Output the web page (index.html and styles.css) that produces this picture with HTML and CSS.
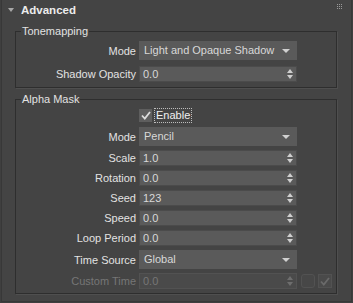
FILE: index.html
```html
<!DOCTYPE html>
<html lang="en">

<head>
    <meta charset="UTF-8">
    <meta name="viewport" content="width=device-width, initial-scale=1.0">
    <title>Advanced</title>
    <link rel="stylesheet" href="styles.css">
</head>

<body>
    <div class="rollout">
        <div class="rollout-head">
            <span class="caret"></span>
            <span class="title">Advanced</span>
            <svg class="grip" width="6" height="6" viewBox="0 0 6 6">
                <g fill="#9a9a9a">
                    <rect x="0" y="0" width="1" height="1"/><rect x="2" y="0" width="1" height="1"/><rect x="4" y="0" width="1" height="1"/>
                    <rect x="0" y="2" width="1" height="1"/><rect x="2" y="2" width="1" height="1"/><rect x="4" y="2" width="1" height="1"/>
                    <rect x="0" y="4" width="1" height="1"/><rect x="2" y="4" width="1" height="1"/><rect x="4" y="4" width="1" height="1"/>
                </g>
            </svg>
        </div>

        <fieldset class="group tonemap">
            <legend>Tonemapping</legend>
            <div class="rows">
                <label>Mode</label>
                <div class="dropdown">Light and Opaque Shadow</div>
                <label>Shadow Opacity</label>
                <div class="spinner">0.0</div>
            </div>
        </fieldset>

        <fieldset class="group alpha">
            <legend>Alpha Mask</legend>
            <div class="rows">
                <span></span>
                <div class="check-row">
                    <span class="checkbox">
                        <svg width="10" height="9" viewBox="0 0 10 9"><path d="M1 4.5 L3.8 7.5 L9 1" fill="none" stroke="#dcdcdc" stroke-width="1.8"/></svg>
                    </span>
                    <span class="check-label">Enable</span>
                </div>
                <label>Mode</label>
                <div class="dropdown">Pencil</div>
                <label>Scale</label>
                <div class="spinner">1.0</div>
                <label>Rotation</label>
                <div class="spinner">0.0</div>
                <label>Seed</label>
                <div class="spinner">123</div>
                <label>Speed</label>
                <div class="spinner">0.0</div>
                <label>Loop Period</label>
                <div class="spinner">0.0</div>
                <label>Time Source</label>
                <div class="dropdown">Global</div>
                <label class="disabled">Custom Time</label>
                <div class="spinner disabled">0.0</div>
                <div class="extra">
                    <span class="small-btn"></span>
                    <span class="small-check">
                        <svg width="10" height="9" viewBox="0 0 10 9"><path d="M1 4.5 L3.8 7.5 L9 1" fill="none" stroke="#6a6a6a" stroke-width="1.8"/></svg>
                    </span>
                </div>
            </div>
        </fieldset>
    </div>
</body>

</html>
```

FILE: styles.css
```css
:root {
    --panel: #444444;
    --field: #5a5a5a;
    --field-border: #4b4b4b;
    --text: #e2e2e2;
    --dim: #767676;
    --groove: #2e2e2e;
}

* {
    box-sizing: border-box;
    margin: 0;
    padding: 0;
}

body {
    font-family: "Liberation Sans", Arial, sans-serif;
    font-size: 11px;
    color: var(--text);
    background-color: #3f3f3f;
}

.rollout {
    width: 351px;
    height: 302px;
    margin-left: 1px;
    background: var(--panel);
    border: 1px solid #383838;
    border-top: none;
}

.rollout-head {
    display: flex;
    align-items: center;
    height: 24px;
    padding: 0 7px 4px 6px;
}

.caret {
    width: 0;
    height: 0;
    border-left: 3px solid transparent;
    border-right: 3px solid transparent;
    border-top: 4px solid #a8a8a8;
    margin-right: 7px;
}

.title {
    font-size: 11.5px;
    font-weight: bold;
    color: #ececec;
    flex: 1;
}

.grip {
    margin-top: -6px;
    margin-right: 1px;
}

.group {
    margin: 0 14px 0 13px;
    border: 1px solid var(--groove);
    box-shadow: 1px 1px 0 #4f4f4f;
    padding: 0;
}

.group legend {
    margin-left: 5px;
    padding: 0 1px;
    line-height: 14px;
    font-size: 11px;
}

.rows {
    display: grid;
    grid-template-columns: 120px 158px auto;
    column-gap: 3px;
    align-items: center;
}

.tonemap .rows {
    padding: 3px 0 5px;
    row-gap: 6px;
}

.alpha {
    margin-top: 4px;
}

.alpha .rows {
    padding: 2px 0 4px;
    row-gap: 4px;
}

.rows label {
    grid-column: 1;
    text-align: right;
    white-space: nowrap;
}

.rows > div:not(.extra) {
    grid-column: 2;
}

.dropdown,
.spinner {
    position: relative;
    background: var(--field);
    color: #d8d8d8;
    white-space: nowrap;
}

.dropdown {
    height: 19px;
    line-height: 19px;
    padding-left: 5px;
}

.dropdown::after {
    content: "";
    position: absolute;
    right: 7px;
    top: 8px;
    border-left: 4px solid transparent;
    border-right: 4px solid transparent;
    border-top: 4px solid #d0d0d0;
}

.spinner {
    height: 16px;
    line-height: 14px;
    padding-left: 3px;
    border: 1px solid var(--field-border);
}

.spinner::before,
.spinner::after {
    content: "";
    position: absolute;
    right: 3px;
    border-left: 3px solid transparent;
    border-right: 3px solid transparent;
}

.spinner::before {
    top: 2px;
    border-bottom: 4px solid #cfcfcf;
}

.spinner::after {
    top: 8px;
    border-top: 4px solid #cfcfcf;
}

.check-row {
    display: flex;
    align-items: center;
    height: 15px;
}

.checkbox {
    display: flex;
    align-items: center;
    justify-content: center;
    width: 13px;
    height: 13px;
    background: #5e5e5e;
}

.check-label {
    margin-left: 2px;
    padding: 0 1px;
    line-height: 13px;
    border: 1px dotted #bdbdbd;
    color: #f0f0f0;
}

.rows label.disabled,
.spinner.disabled {
    color: var(--dim);
}

.spinner.disabled {
    background: #4a4a4a;
    border-color: #525252;
}

.spinner.disabled::before {
    border-bottom-color: #6e6e6e;
}

.spinner.disabled::after {
    border-top-color: #6e6e6e;
}

.extra {
    grid-column: 3;
    display: flex;
    gap: 3px;
    margin-left: 1px;
}

.small-btn,
.small-check {
    display: flex;
    align-items: center;
    justify-content: center;
    width: 14px;
    height: 14px;
    border: 1px solid #525252;
}

.small-btn {
    border-radius: 3px;
    background: #474747;
}

.small-check {
    background: #4a4a4a;
}
```
